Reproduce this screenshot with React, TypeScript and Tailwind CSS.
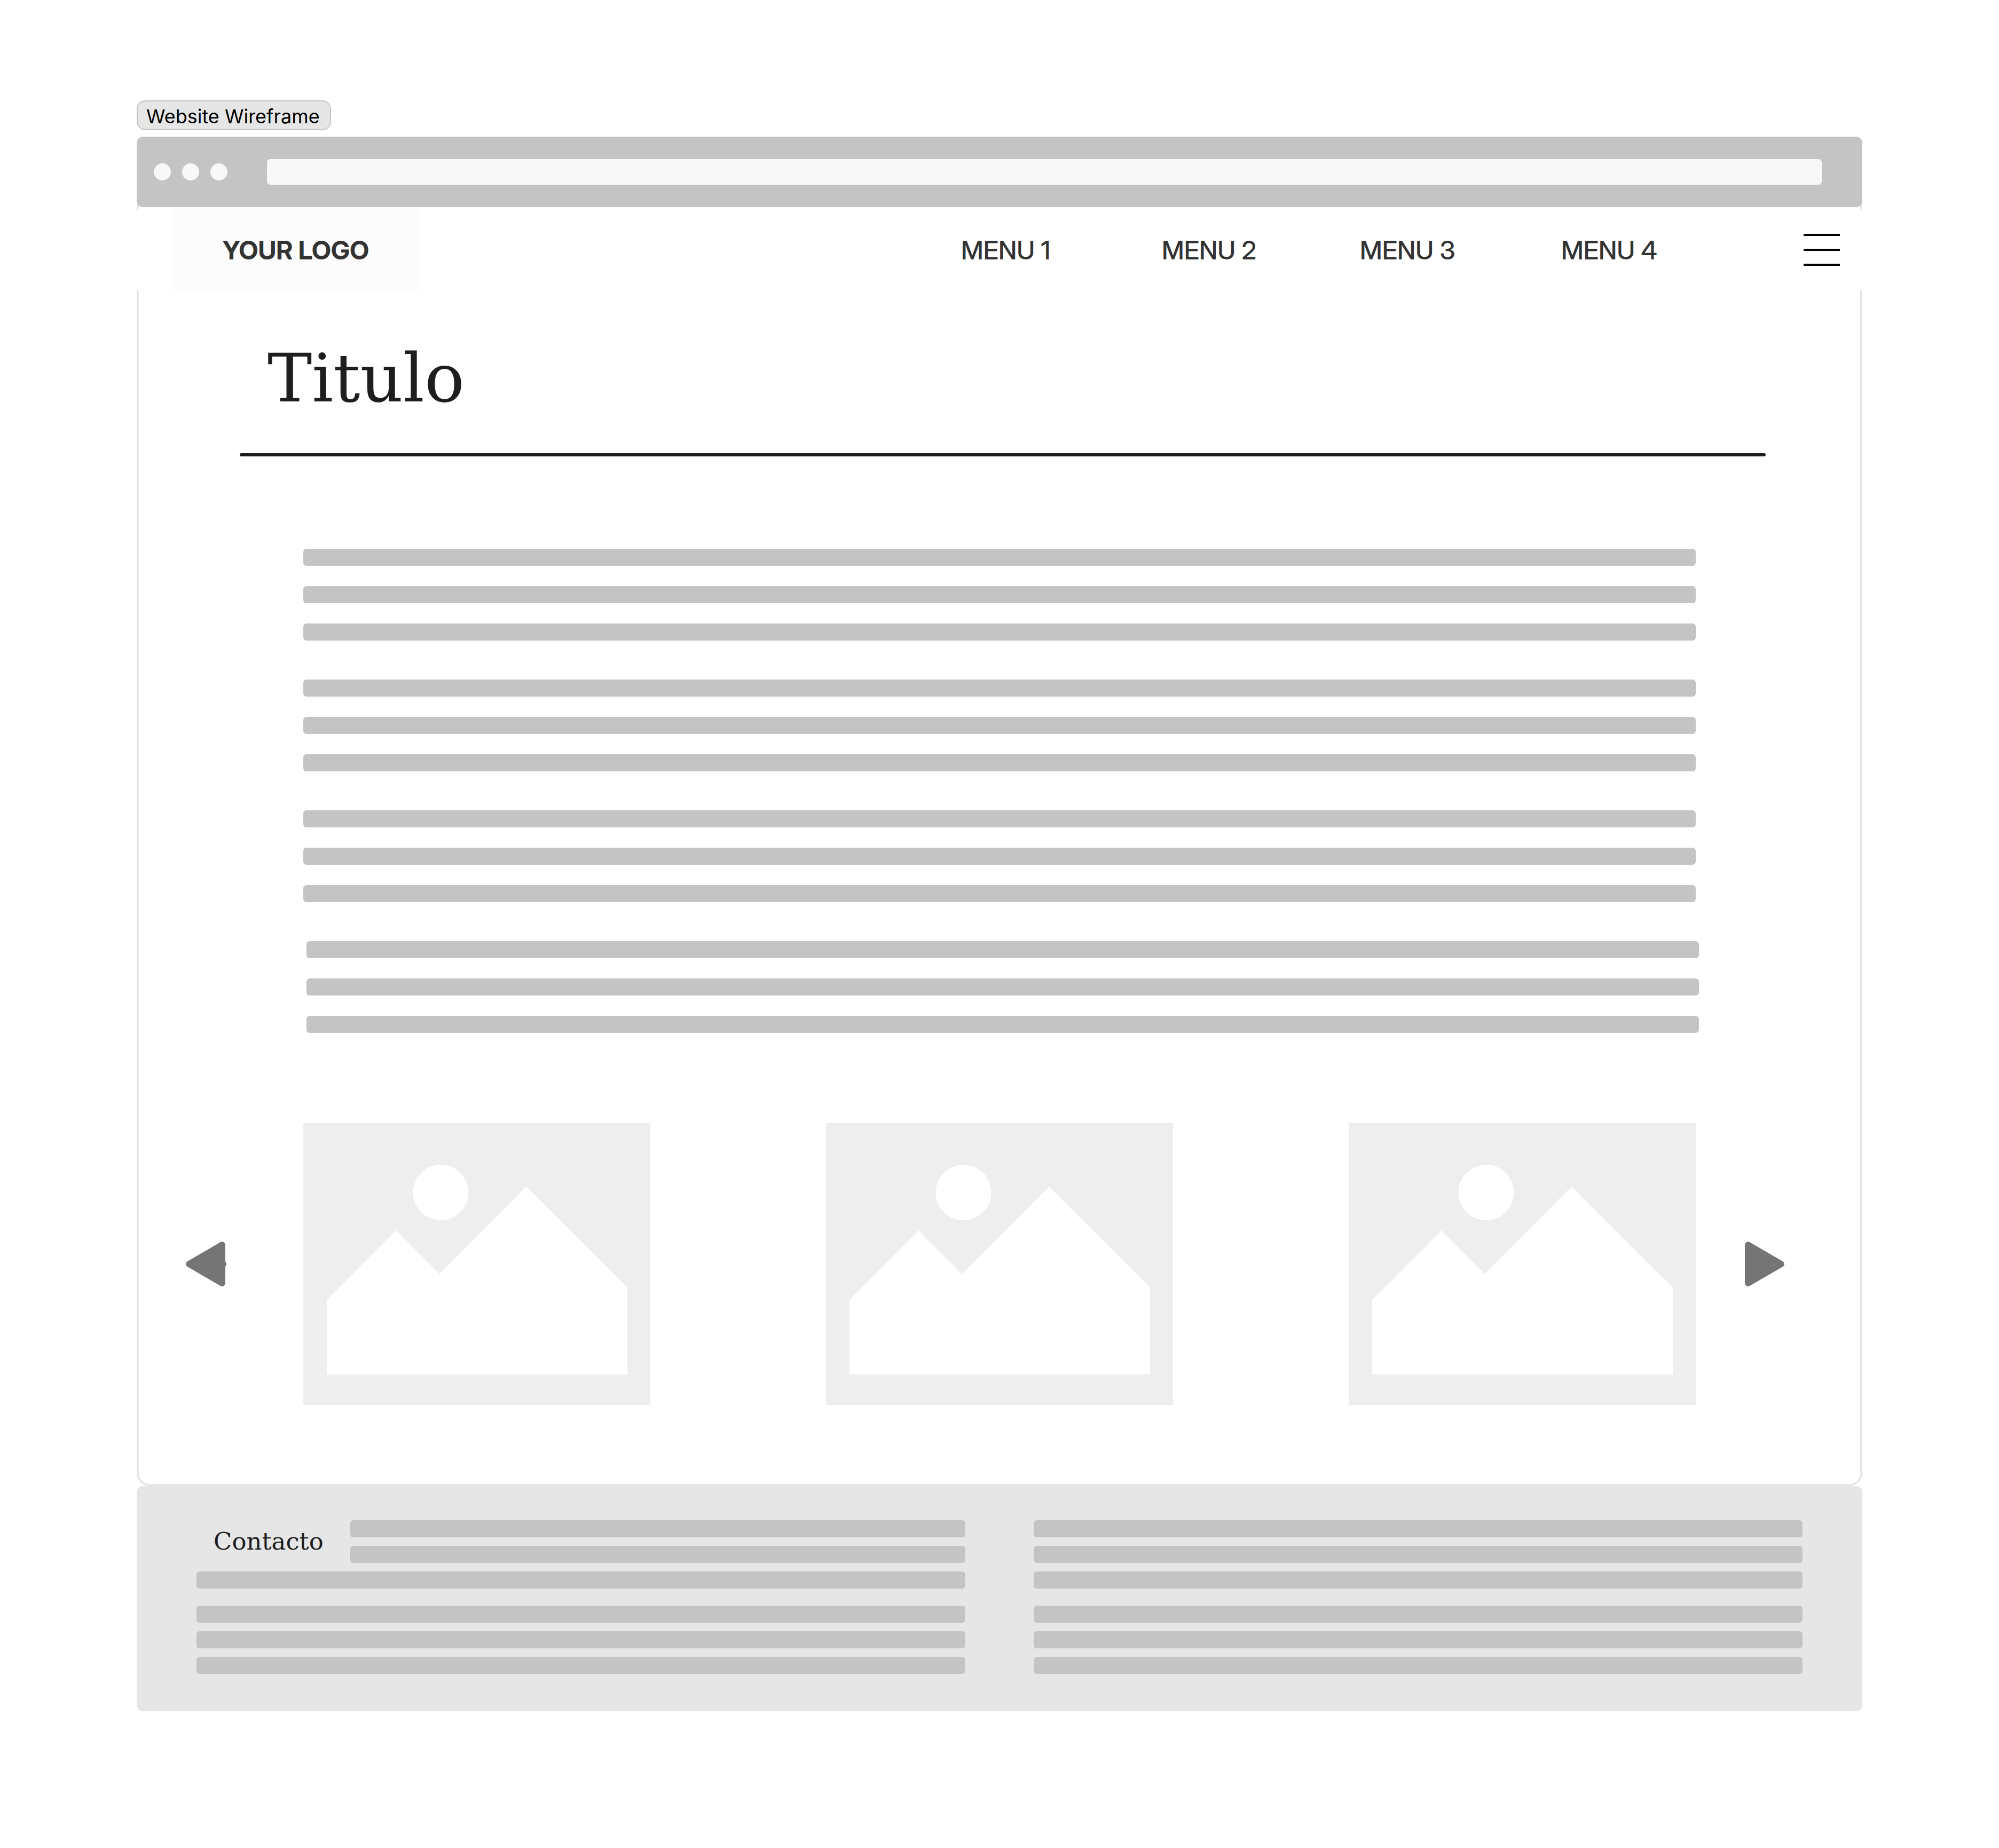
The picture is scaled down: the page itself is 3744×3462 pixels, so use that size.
import { useId } from "react";

const slides = ["Image 1", "Image 2", "Image 3"];
const menu = [
  { label: "MENU 1", width: "w-[376px]" },
  { label: "MENU 2", width: "w-[371px]" },
  { label: "MENU 3", width: "w-[377px]" },
  { label: "MENU 4", width: "w-[454px]" },
];

function Bar() {
  return <div className="h-8 w-full rounded-md bg-[#c4c4c4]" />;
}

function Paragraph({ className = "" }: { className?: string }) {
  return (
    <div className={`flex flex-col gap-[38px] ${className}`}>
      <Bar />
      <Bar />
      <Bar />
    </div>
  );
}

function FooterBlock() {
  return (
    <div className="flex flex-col gap-4">
      <Bar />
      <Bar />
      <Bar />
    </div>
  );
}

function Placeholder({ label }: { label: string }) {
  const id = useId();
  return (
    <svg viewBox="0 0 650 528" className="w-1/4 max-w-[650px]" role="img" aria-labelledby={id}>
      <title id={id}>{label}</title>
      <rect width="650" height="528" fill="#eeeeee" />
      <circle cx="257.5" cy="130" r="52" fill="#ffffff" />
      <path d="M44 331 173.5 201 255 282.5 417.5 119 607 308V470.5H44Z" fill="#ffffff" />
    </svg>
  );
}

function BrowserBar() {
  return (
    <div className="relative flex h-[132px] items-center rounded-xl bg-[#c4c4c4] pr-19 pl-8">
      <div className="flex gap-[21px]">
        <span className="size-8 rounded-full bg-[#f8f8f8]" />
        <span className="size-8 rounded-full bg-[#f8f8f8]" />
        <span className="size-8 rounded-full bg-[#f8f8f8]" />
      </div>
      <input
        type="text"
        aria-label="Address"
        className="ml-[74px] h-12 min-w-0 flex-1 rounded-md bg-[#f8f8f8] px-4 text-3xl outline-none"
      />
    </div>
  );
}

function Header() {
  return (
    <header className="-mx-1 flex h-40 items-center justify-between rounded-xl bg-white pr-[42px] pl-16 font-['Inter_Display',Inter,sans-serif] text-[48px] leading-[60px] text-[#333333]">
      <a
        href="#inicio"
        className="flex h-[158px] w-[468px] items-center justify-center rounded-xl bg-[#fcfcfc] pt-0.5 font-bold"
      >
        YOUR LOGO
      </a>
      <div className="flex items-center">
        <nav className="flex pt-0.5 font-medium">
          {menu.map((item) => (
            <div key={item.label} className={item.width}>
              <a href="#menu">{item.label}</a>
            </div>
          ))}
        </nav>
        <button type="button" aria-label="Menu" className="flex w-[68px] flex-col gap-6">
          <span className="h-1 bg-black" />
          <span className="h-1 bg-black" />
          <span className="h-1 bg-black" />
        </button>
      </div>
    </header>
  );
}

function Carousel() {
  return (
    <section className="mt-[169px] mb-[148px] flex items-center pr-[142px] pl-[88px]">
      <button type="button" aria-label="Anterior" className="w-[76px]">
        <svg viewBox="0 0 76 84" fill="#757575">
          <path d="M3 37 64 1.5Q68-1 71 1 74 3 74 8V37Q76 39 76 42T74 47V76Q74 81 71 83 68 85 64 82.5L3 47Q0 45 0 42T3 37Z" />
        </svg>
      </button>
      <div className="mr-23 ml-36 flex flex-1 justify-between">
        {slides.map((label) => (
          <Placeholder key={label} label={label} />
        ))}
      </div>
      <button type="button" aria-label="Siguiente" className="w-[74px]">
        <svg viewBox="0 0 74 84" fill="#757575">
          <path d="M71 37 10 1.5Q6-1 3 1 0 3 0 8V76Q0 81 3 83 6 85 10 82.5L71 47Q74 45 74 42T71 37Z" />
        </svg>
      </button>
    </section>
  );
}

function Footer() {
  return (
    <footer className="grid grid-cols-2 gap-x-32 rounded-xl bg-[#e6e6e6] px-28 pt-16 pb-[70px]">
      <div className="flex flex-col gap-8">
        <div className="flex flex-col gap-4">
          <div className="flex items-center">
            <h2 className="w-72 pl-8 font-['DejaVu_Serif',serif] text-[45px] leading-[60px] text-[#1e1e1e]">
              Contacto
            </h2>
            <div className="flex flex-1 flex-col gap-4">
              <Bar />
              <Bar />
            </div>
          </div>
          <Bar />
        </div>
        <FooterBlock />
      </div>
      <div className="flex flex-col gap-8">
        <FooterBlock />
        <FooterBlock />
      </div>
    </footer>
  );
}

export default function App() {
  return (
    <div className="min-h-screen bg-white px-64 pt-[188px] pb-64 font-[Inter,sans-serif]">
      <div className="flex h-14 w-[364px] items-center rounded-2xl border-2 border-[#c4c4c4] bg-[#e6e6e6] pt-1 pl-4 text-[36px] leading-[44px] text-black">
        Website Wireframe
      </div>

      <div className="mt-3">
        <BrowserBar />
        <main className="-mt-3 rounded-b-3xl border-4 border-t-0 border-[#e6e6e6] bg-white pt-3">
          <Header />
          <div className="mr-[177px] ml-[189px] pt-[81px]">
            <h1 className="pl-[52px] font-['DejaVu_Serif',serif] text-[125px] leading-[160px] text-[#1e1e1e]">
              Titulo
            </h1>
            <hr className="mt-[60px] h-1.5 rounded-full border-0 bg-[#1e1e1e]" />
          </div>

          <section className="mx-[308px] mt-[173px] flex flex-col gap-[73px]">
            <Paragraph />
            <Paragraph />
            <Paragraph />
            <Paragraph className="-mr-1.5 ml-1.5" />
          </section>

          <Carousel />
        </main>
        <Footer />
      </div>
    </div>
  );
}
